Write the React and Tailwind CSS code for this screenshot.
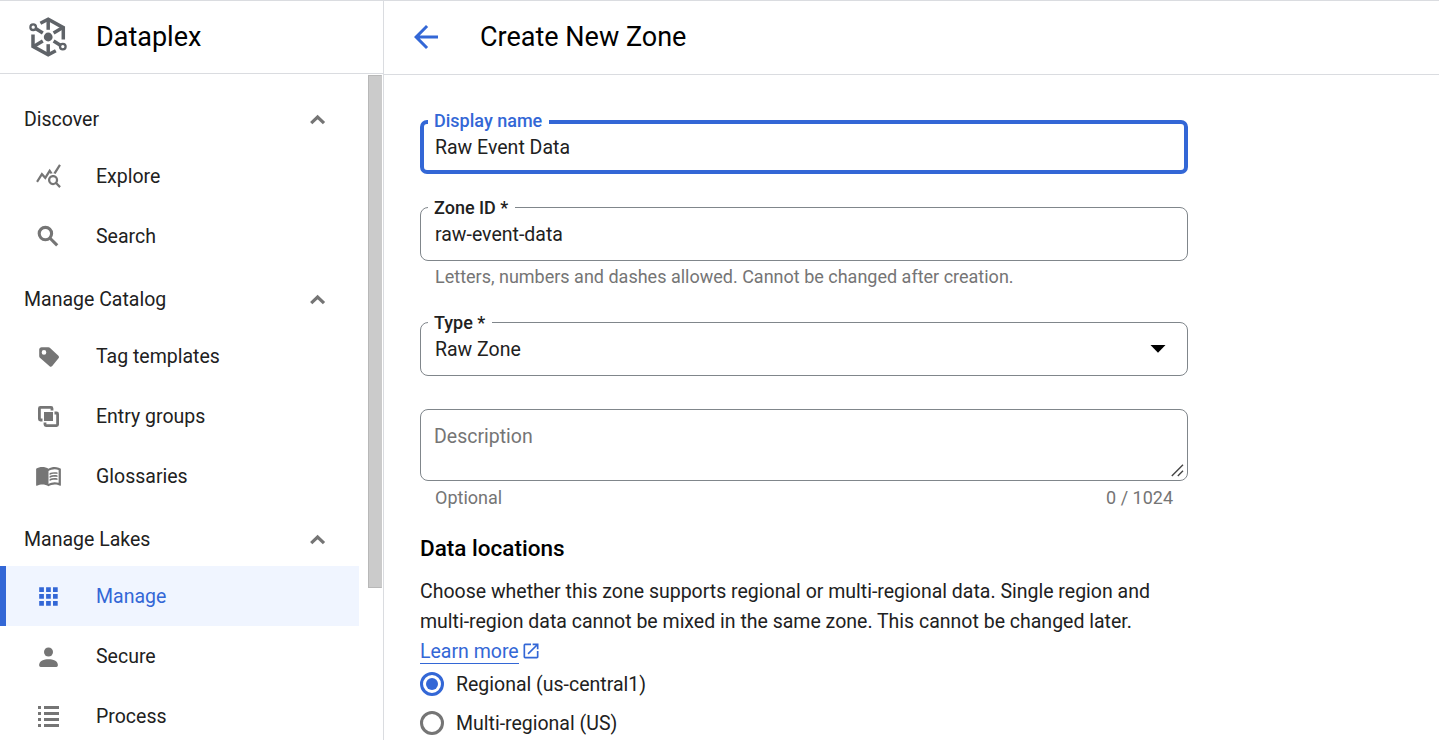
import { MdArrowBack, MdMenuBook, MdOpenInNew, MdQueryStats } from "react-icons/md";

function DataplexLogo() {
  return (
    <svg className="h-[40px] w-[38px]" viewBox="0 0 38 40" fill="none" stroke="#5f6368" strokeWidth="3.5">
      <path d="M11.4 6.2 19.2 2.2 34.3 10.6V22.6" />
      <path d="M33.8 10.6 24.6 16" />
      <path d="M19.2 2.5V12.8" />
      <path d="M26.8 33.8 19.2 37.8 4 29.4V17.4" />
      <path d="M4.6 29.4 13.8 24" />
      <path d="M19.2 37.5V27.2" />
      <path d="M7 11.8 13.8 16" />
      <path d="M31.4 28.2 24.6 24" />
      <circle cx="4.2" cy="10.2" r="2.8" strokeWidth="2.3" />
      <circle cx="33.8" cy="29.6" r="2.8" strokeWidth="2.3" />
      <circle cx="19.2" cy="20" r="4.4" fill="#5f6368" stroke="none" />
    </svg>
  );
}

function SearchIcon() {
  return (
    <svg className="h-[28px] w-[27px]" viewBox="0 0 27 28" fill="none" stroke="currentColor" strokeWidth="3.1">
      <circle cx="10.4" cy="11.6" r="6.2" />
      <path d="M14.8 16 22.2 23.4" />
    </svg>
  );
}

function TagIcon() {
  return (
    <svg className="h-[28px] w-[27px]" viewBox="0 -1.2 27 28" fill="currentColor">
      <path
        fillRule="evenodd"
        d="M6.6 4H13.4C14.1 4 14.6 4.2 15.1 4.7L23.4 12.6C24.2 13.4 24.2 14.4 23.5 15.1L17.2 22.9C16.4 23.7 15.4 23.8 14.6 23L4.9 14.5C4.4 14 4.2 13.4 4.2 12.7V6.4C4.2 5 5.2 4 6.6 4ZM9 6.9A2.3 2.3 0 1 0 9 11.5 2.3 2.3 0 1 0 9 6.9Z"
      />
    </svg>
  );
}

function EntryGroupsIcon() {
  return (
    <svg className="h-[28px] w-[27px]" viewBox="0 -1 27 28" fill="none" stroke="currentColor" strokeWidth="2.8">
      <path d="M17 7.5V5.4Q17 4.4 16 4.4H5.4Q4.4 4.4 4.4 5.4V16Q4.4 17 5.4 17H7.5" />
      <path d="M19.5 10H21.6Q22.6 10 22.6 11V21.6Q22.6 22.6 21.6 22.6H11Q10 22.6 10 21.6V19.5" />
      <path d="M9 9H18V18H9Z" fill="currentColor" stroke="none" />
    </svg>
  );
}

function AppsIcon() {
  return (
    <svg className="h-[28px] w-[27px]" viewBox="0 0 27 28" fill="currentColor">
      <path d="M4.2 5.2h4.7v4.7H4.2zM11.1 5.2h4.7v4.7h-4.7zM18 5.2h4.7v4.7H18zM4.2 12.1h4.7v4.7H4.2zM11.1 12.1h4.7v4.7h-4.7zM18 12.1h4.7v4.7H18zM4.2 19h4.7v4.7H4.2zM11.1 19h4.7v4.7h-4.7zM18 19h4.7v4.7H18z" />
    </svg>
  );
}

function PersonIcon() {
  return (
    <svg className="h-[28px] w-[27px]" viewBox="0 0 27 28" fill="currentColor">
      <circle cx="13.5" cy="10" r="4.5" />
      <path d="M4.2 22.6C4.2 19 9 17.2 13.5 17.2S22.8 19 22.8 22.6V23.6Q22.8 25 21.4 25H5.6Q4.2 25 4.2 23.6Z" />
    </svg>
  );
}

function ListIcon() {
  return (
    <svg className="h-[28px] w-[27px]" viewBox="0 0 27 28" fill="currentColor">
      <path d="M3 4h3v3H3zM9 4h15v3H9zM3 10h3v3H3zM9 10h15v3H9zM3 16h3v3H3zM9 16h15v3H9zM3 22h3v3H3zM9 22h15v3H9z" />
    </svg>
  );
}

function Chevron() {
  return (
    <svg className="h-[11px] w-[16px]" viewBox="0 0 16 11" fill="none" stroke="#757575" strokeWidth="3.2">
      <path d="M1.2 9.2 7.6 3 14 9.2" />
    </svg>
  );
}

const sections = [
  {
    title: "Discover",
    items: [
      { label: "Explore", Icon: MdQueryStats },
      { label: "Search", Icon: SearchIcon },
    ],
  },
  {
    title: "Manage Catalog",
    items: [
      { label: "Tag templates", Icon: TagIcon },
      { label: "Entry groups", Icon: EntryGroupsIcon },
      { label: "Glossaries", Icon: MdMenuBook },
    ],
  },
  {
    title: "Manage Lakes",
    items: [
      { label: "Manage", Icon: AppsIcon, active: true },
      { label: "Secure", Icon: PersonIcon },
      { label: "Process", Icon: ListIcon },
    ],
  },
];

function NavItem({ label, Icon, active }) {
  return (
    <a
      className={
        active
          ? "flex h-[60px] w-[359px] items-center border-l-[6px] border-[#3367d6] bg-[#f0f5ff] pl-[29px] text-[#3367d6]"
          : "flex h-[60px] w-[359px] items-center pl-[35px] text-[#212121]"
      }
    >
      <span
        className={
          active
            ? "flex h-[28px] w-[27px] items-start text-[27px] text-[#3367d6]"
            : "flex h-[28px] w-[27px] items-start text-[27px] text-[#757575]"
        }
      >
        <Icon />
      </span>
      <span className="pt-[2px] pl-[34px]">{label}</span>
    </a>
  );
}

function Sidebar() {
  return (
    <aside className="flex w-[384px] shrink-0 flex-col border-r border-[#dadce0]">
      <div className="flex h-[73px] shrink-0 items-center border-b border-[#dadce0] pl-[29px]">
        <DataplexLogo />
        <span className="pl-[29px] text-[27px] leading-9 text-black">Dataplex</span>
      </div>
      <div className="flex min-h-0 flex-1 justify-between pt-px">
        <nav className="pt-[11px]">
          {sections.map((section) => (
            <div key={section.title}>
              <div className="flex h-[60px] items-center justify-between pt-[6px] pr-[33px] pl-6 text-[#212121]">
                <span className="pt-[2px]">{section.title}</span>
                <Chevron />
              </div>
              {section.items.map((item) => (
                <NavItem key={item.label} {...item} />
              ))}
            </div>
          ))}
        </nav>
        <div className="mr-px h-[513px] w-[14px] border border-[#b8b8b8] border-r-[#cbcbcb] bg-[#cbcbcb]" />
      </div>
    </aside>
  );
}

function Field({ label, value, focused, children }) {
  return (
    <fieldset
      className={
        focused
          ? "h-[63px] w-[768px] rounded-[7px] border-4 border-[#3367d6] pl-1"
          : "h-[63px] w-[768px] rounded-[8px] border border-[#80868b] pl-[7px]"
      }
    >
      <legend
        className={
          focused
            ? "h-[22px] pr-[7px] pl-[6px] text-[18px] leading-[20px] font-medium text-[#3367d6]"
            : "h-[19px] pr-[7px] pl-[6px] text-[18px] leading-[20px] font-medium text-[#212121]"
        }
      >
        {label}
      </legend>
      <div
        className={
          focused
            ? "flex justify-between pt-px pl-[7px] leading-[28px]"
            : "flex justify-between pt-[4px] pl-[7px] leading-[28px]"
        }
      >
        <span>{value}</span>
        {children}
      </div>
    </fieldset>
  );
}

function Radio({ label, checked }) {
  return (
    <label className="flex h-[39px] items-center gap-3">
      <span
        className={
          checked
            ? "flex size-6 items-center justify-center rounded-full border-[3px] border-[#3367d6]"
            : "flex size-6 rounded-full border-[3px] border-[#757575]"
        }
      >
        {checked && <span className="size-3 rounded-full bg-[#3367d6]" />}
      </span>
      <span className="pt-[2px]">{label}</span>
    </label>
  );
}

export default function App() {
  return (
    <div className="flex h-[740px] w-[1439px] overflow-hidden border-t border-[#dadce0] bg-white font-['Roboto',sans-serif] text-[19.5px] text-[#212121]">
      <Sidebar />
      <main className="flex-1">
        <header className="flex h-[74px] items-center border-b border-[#dadce0] pb-[2px] pl-6">
          <MdArrowBack className="size-9 text-[#3367d6]" />
          <h1 className="pl-9 text-[27px] leading-9 text-black">Create New Zone</h1>
        </header>
        <form className="flex flex-col pt-[36px] pl-9">
          <Field label="Display name" value="Raw Event Data" focused />
          <div className="pt-[24px]">
            <Field label="Zone ID *" value="raw-event-data" />
          </div>
          <p className="pt-[3px] pl-[15px] text-[18px] leading-[26px] text-[#757575]">
            Letters, numbers and dashes allowed. Cannot be changed after creation.
          </p>
          <div className="pt-[23px]">
            <Field label="Type *" value="Raw Zone">
              <svg className="mt-[9px] mr-[21px] h-2 w-4" viewBox="0 0 16 8">
                <path d="M0.5 0H15.5L8 7.8Z" fill="#000" />
              </svg>
            </Field>
          </div>
          <div className="mt-[33px] flex h-[72px] w-[768px] items-end justify-between rounded-[8px] border border-[#80868b] pr-[3px] pb-[3px] pl-[13px]">
            <span className="self-start pt-[13px] leading-[28px] text-[#757575]">Description</span>
            <svg className="size-[13px]" viewBox="0 0 13 13" stroke="#444" strokeWidth="1.4">
              <path d="M0.8 12 12 0.8M6.8 12 12 6.8" />
            </svg>
          </div>
          <div className="flex w-[768px] justify-between px-[15px] pt-1 text-[18px] leading-[26px] text-[#757575]">
            <span>Optional</span>
            <span>0 / 1024</span>
          </div>
          <h2 className="pt-[22px] text-[22.5px] leading-[30px] font-medium text-black">Data locations</h2>
          <div className="pt-[14px] leading-[30px]">
            <p>Choose whether this zone supports regional or multi-regional data. Single region and</p>
            <p>multi-region data cannot be mixed in the same zone. This cannot be changed later.</p>
            <a className="flex h-[27px] items-start gap-[2px] text-[#3367d6]">
              <span className="h-[27px] border-b border-[#3367d6]">Learn more</span>
              <MdOpenInNew className="mt-[4px] size-[20px]" />
            </a>
          </div>
          <Radio label="Regional (us-central1)" checked />
          <Radio label="Multi-regional (US)" />
        </form>
      </main>
    </div>
  );
}
